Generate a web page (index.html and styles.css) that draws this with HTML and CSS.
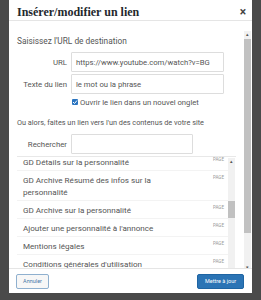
FILE: index.html
```html
<!DOCTYPE html>
<html lang="fr">
<head>
<meta charset="utf-8">
<title>Insérer/modifier un lien</title>
<link rel="stylesheet" href="styles.css">
</head>
<body>
<div class="modal">
  <div class="head">
    <span class="title">Insérer/modifier un lien</span>
    <span class="close">×</span>
  </div>
  <div class="body">
    <div class="content">
      <p class="intro">Saisissez l'URL de destination</p>
      <div class="row">
        <label class="lbl">URL</label>
        <div class="input wide">https://www.youtube.com/watch?v=BG</div>
      </div>
      <div class="row">
        <label class="lbl">Texte du lien</label>
        <div class="input wide">le mot ou la phrase</div>
      </div>
      <div class="check">
        <span class="box"><svg width="6" height="6" viewBox="0 0 6 6"><path d="M1 3 L2.5 4.5 L5 1.5" stroke="#fff" stroke-width="1" fill="none"/></svg></span>
        <span>Ouvrir le lien dans un nouvel onglet</span>
      </div>
      <p class="intro2">Ou alors, faites un lien vers l'un des contenus de votre site</p>
      <div class="row">
        <label class="lbl">Rechercher</label>
        <div class="input short"></div>
      </div>
      <div class="list">
        <div class="items">
          <div class="item"><span class="name">GD Détails sur la personnalité</span><span class="type">PAGE</span></div>
          <div class="item"><span class="name">GD Archive Résumé des infos sur la personnalité</span><span class="type">PAGE</span></div>
          <div class="item"><span class="name">GD Archive sur la personnalité</span><span class="type">PAGE</span></div>
          <div class="item"><span class="name">Ajouter une personnalité à l'annonce</span><span class="type">PAGE</span></div>
          <div class="item"><span class="name">Mentions légales</span><span class="type">PAGE</span></div>
          <div class="item"><span class="name">Conditions générales d'utilisation</span><span class="type">PAGE</span></div>
        </div>
        <div class="sb inner">
          <span class="arrow">▴</span>
          <div class="track"><div class="thumb"></div></div>
        </div>
      </div>
    </div>
    <div class="sb outer">
      <span class="arrow">▴</span>
      <div class="track"><div class="thumb"></div></div>
      <span class="arrow">▾</span>
    </div>
  </div>
  <div class="foot">
    <button class="btn cancel">Annuler</button>
    <button class="btn primary">Mettre à jour</button>
  </div>
</div>
</body>
</html>
```
FILE: styles.css
```css
* { box-sizing: border-box; }
html, body { margin: 0; padding: 0; }
body {
  width: 261px;
  height: 300px;
  background: #4a4a4a;
  font-family: Roboto, "Noto Sans", sans-serif;
  overflow: hidden;
}
.modal {
  margin-left: 9px;
  width: 243px;
  height: 293px;
  background: #fff;
  display: flex;
  flex-direction: column;
}
.head {
  height: 21px;
  border-bottom: 1px solid #e5e5e5;
  display: flex;
  align-items: center;
  justify-content: space-between;
  padding: 0 6px 0 8px;
  flex: none;
}
.title {
  font-family: "Liberation Serif", serif;
  font-weight: bold;
  font-size: 12px;
  color: #23282d;
  padding-top: 4px;
}
.close {
  font-size: 12px;
  font-weight: bold;
  color: #444;
  padding-top: 3px;
}
.body {
  flex: 1;
  display: flex;
  overflow: hidden;
  min-height: 0;
}
.content {
  flex: 1;
  padding: 15px 8px 0 8px;
  color: #555;
  font-size: 7.6px;
  min-width: 0;
}
.intro { margin: 0 0 6px 0; font-size: 8.3px; line-height: 10px; color: #555; }
.row {
  display: flex;
  align-items: center;
  height: 20px;
  margin-bottom: 2px;
}
.lbl {
  width: 54px;
  flex: none;
  text-align: right;
  padding-right: 4px;
  font-size: 7.8px;
  color: #555;
}
.input {
  height: 20px;
  border: 1px solid #ddd;
  border-radius: 1px;
  padding: 0 4px;
  display: flex;
  align-items: center;
  color: #555;
  font-size: 7.7px;
  white-space: nowrap;
  overflow: hidden;
  flex: none;
}
.wide { width: 153px; }
.short { width: 122px; }
.check {
  display: flex;
  align-items: center;
  gap: 2px;
  margin: 0 0 10px 55px;
  height: 12px;
  color: #555;
  font-size: 7.7px;
}
.box {
  width: 6px;
  height: 6px;
  background: #2b75c0;
  border-radius: 1px;
  display: flex;
}
.intro2 { margin: 0 0 6px 0; font-size: 7.3px; line-height: 10px; color: #555; white-space: nowrap; }
.list {
  margin-top: 2px;
  border-top: 1px solid #e8e8e8;
  display: flex;
  height: 130px;
  overflow: hidden;
  padding-right: 1px;
}
.items {
  flex: 1;
  margin-top: -4px;
  min-width: 0;
}
.item {
  display: flex;
  justify-content: space-between;
  align-items: flex-start;
  padding: 3px 4px 2px 6px;
  line-height: 12px;
  border-bottom: 1px solid #f3f3f3;
  font-size: 8.1px;
  color: #555;
}
.name { width: 162px; }
.type {
  font-size: 4.5px;
  color: #999;
  line-height: 8px;
}
.sb {
  width: 7px;
  display: flex;
  flex-direction: column;
  align-items: center;
  background: #f1f1f1;
  flex: none;
}
.arrow {
  font-size: 5px;
  line-height: 7px;
  color: #555;
}
.track { flex: 1; width: 100%; display: flex; flex-direction: column; }
.outer { margin-top: 10px; height: 240px; margin-right: 1px; }
.outer .thumb { height: 194px; margin-top: 1px; background: #c1c1c1; }
.inner { margin-top: 1px; }
.inner .thumb { height: 17px; margin-top: 36px; background: #c1c1c1; }
.foot {
  flex: none;
  height: 25px;
  border-top: 1px solid #e5e5e5;
  display: flex;
  justify-content: space-between;
  align-items: center;
  padding: 0 8px 0 7px;
}
.btn {
  height: 15px;
  font-family: Roboto, sans-serif;
  font-size: 5.5px;
  border-radius: 2px;
  padding: 0 5px;
  cursor: pointer;
}
.cancel {
  width: 33px;
  background: #f7f7f7;
  border: 1px solid #8fb0cf;
  color: #4a78a8;
}
.primary {
  width: 47px;
  background: #2b74b5;
  border: 1px solid #1f65a3;
  color: #fff;
}
```
